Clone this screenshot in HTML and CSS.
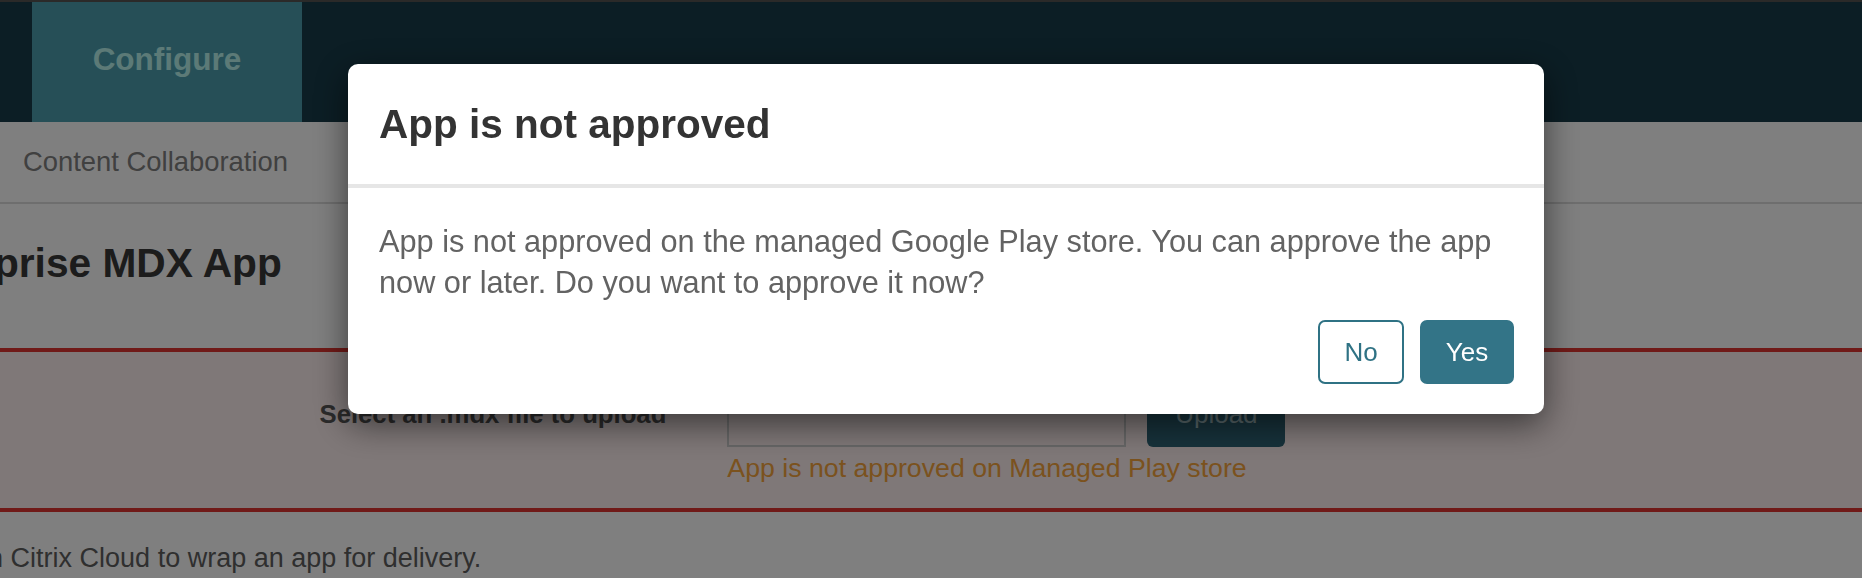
FILE: index.html
```html
<!DOCTYPE html>
<html lang="en">
<head>
<meta charset="utf-8">
<title>Add Enterprise MDX App</title>
<link rel="stylesheet" href="styles.css">
</head>
<body>
<div class="page">
  <header class="topbar">
    <nav class="mainnav">
      <a class="tab tab-active">Configure</a>
    </nav>
  </header>
  <div class="subnav">
    <span class="subnav-item">Content Collaboration</span>
  </div>
  <main class="content">
    <h1 class="page-title">Add Enterprise MDX App</h1>
    <section class="upload-box">
      <div class="upload-grid">
        <label class="upload-label">Select an .mdx file to upload</label>
        <div class="file-input"></div>
        <button class="btn-upload">Upload</button>
        <p class="upload-error">App is not approved on Managed Play store</p>
      </div>
    </section>
    <p class="hint">Use the MDX Service in Citrix Cloud to wrap an app for delivery.</p>
  </main>
</div>

<div class="backdrop">
  <div class="modal" role="dialog">
    <div class="modal-header">
      <h2 class="modal-title">App is not approved</h2>
    </div>
    <div class="modal-body">
      App is not approved on the managed Google Play store. You can approve the app now or later. Do you want to approve it now?
    </div>
    <div class="modal-footer">
      <button class="btn btn-secondary">No</button>
      <button class="btn btn-primary">Yes</button>
    </div>
  </div>
</div>
</body>
</html>
```

FILE: styles.css
```css
* { box-sizing: border-box; }

html, body {
  margin: 0;
  padding: 0;
  width: 100%;
  height: 100%;
  overflow: hidden;
  background: #ffffff;
  font-family: "Liberation Sans", Arial, sans-serif;
}

.page {
  width: 100%;
}

/* ---------- top bar ---------- */
.topbar {
  border-top: 2px solid #565452;
  background: #183c4a;
  height: 122px;
  padding-left: 32px;
  display: flex;
}

.mainnav {
  display: flex;
}

.tab {
  width: 270px;
  height: 120px;
  padding-top: 39px;
  text-align: center;
  font-size: 31.5px;
  font-weight: 700;
  line-height: 36px;
  color: #b8f4ee;
}

.tab-active {
  background: #4c9eae;
}

/* ---------- sub navigation ---------- */
.subnav {
  height: 82px;
  border-bottom: 2px solid #dcdcdc;
  display: flex;
  align-items: center;
  padding-left: 23px;
}

.subnav-item {
  font-size: 27.4px;
  color: #808080;
}

/* ---------- content ---------- */
.content {
  margin-left: -274.5px;
}

.page-title {
  margin: 35px 0 61px 74px;
  font-size: 40.7px;
  line-height: 48px;
  font-weight: 700;
  color: #383838;
  white-space: nowrap;
}

.upload-box {
  background: #fef0f0;
  border-top: 4px solid #e03530;
  border-bottom: 4px solid #e03530;
  padding: 29px 0 25px;
}

.upload-grid {
  display: grid;
  grid-template-columns: max-content 399px 138px;
  grid-template-rows: 66px auto;
  justify-content: start;
  column-gap: 21px;
  padding-left: 594px;
}

.upload-label {
  align-self: center;
  margin-right: 40px;
  font-size: 25.7px;
  font-weight: 700;
  color: #565656;
  white-space: nowrap;
}

.file-input {
  border: 2px solid #cccccc;
  height: 66px;
}

.btn-upload {
  height: 66px;
  border: none;
  border-radius: 6px;
  background: #2e6476;
  color: #b0cdd3;
  font-family: inherit;
  font-size: 26px;
}

.upload-error {
  grid-column: 2 / 4;
  margin: 6px 0 0;
  font-size: 26.7px;
  line-height: 30px;
  color: #f6a43c;
  white-space: nowrap;
}

.hint {
  margin: 28px 0 0 -9px;
  font-size: 27px;
  line-height: 36px;
  color: #5e5e5e;
  white-space: nowrap;
}

/* ---------- modal ---------- */
.backdrop {
  position: fixed;
  inset: 0;
  background: rgba(0, 0, 0, 0.5);
}

.modal {
  width: 1196px;
  margin: 64px 0 0 348px;
  background: #ffffff;
  border-radius: 10px;
  box-shadow: 0 10px 34px rgba(0, 0, 0, 0.55);
  overflow: hidden;
}

.modal-header {
  padding: 36px 31px;
  border-bottom: 4px solid #e6e6e6;
}

.modal-title {
  margin: 0;
  font-size: 40.5px;
  line-height: 48px;
  font-weight: 700;
  color: #333333;
}

.modal-body {
  padding: 33px 31px 0;
  font-size: 30.7px;
  line-height: 41px;
  color: #636363;
}

.modal-footer {
  display: flex;
  justify-content: flex-end;
  gap: 16px;
  padding: 17px 30px 30px;
}

.btn {
  height: 64px;
  padding: 0;
  border: 2px solid #2f7284;
  border-radius: 7px;
  font-family: inherit;
  font-size: 26px;
  text-align: center;
}

.btn-secondary {
  width: 86px;
  background: #ffffff;
  color: #2f7284;
}

.btn-primary {
  width: 94px;
  background: #337487;
  border-color: #337487;
  color: #ffffff;
}
```
